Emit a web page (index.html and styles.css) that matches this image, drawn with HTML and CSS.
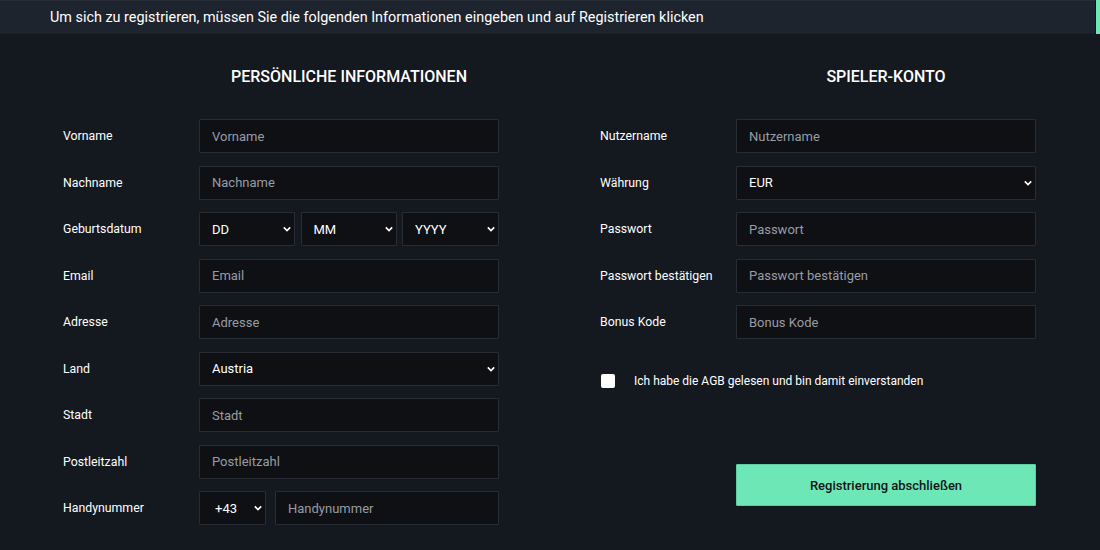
FILE: index.html
```html
<!DOCTYPE html>
<html lang="de">
<head>
<meta charset="utf-8">
<title>Registrierung</title>
<link rel="stylesheet" href="styles.css">
</head>
<body>
<div class="topbar">
  <p class="intro">Um sich zu registrieren, müssen Sie die folgenden Informationen eingeben und auf Registrieren klicken</p>
  <span class="stripe"></span>
</div>
<main class="main">
  <section class="col">
    <h2 class="heading">PERSÖNLICHE INFORMATIONEN</h2>
    <label class="lbl">Vorname</label>
    <input class="field" placeholder="Vorname">
    <label class="lbl">Nachname</label>
    <input class="field" placeholder="Nachname">
    <label class="lbl">Geburtsdatum</label>
    <div class="date">
      <span class="sel"><select class="field"><option>DD</option></select><svg class="chev" viewBox="0 0 10 6"><path d="M1 1l4 4 4-4" fill="none" stroke="#fff" stroke-width="2"/></svg></span>
      <span class="sel"><select class="field"><option>MM</option></select><svg class="chev" viewBox="0 0 10 6"><path d="M1 1l4 4 4-4" fill="none" stroke="#fff" stroke-width="2"/></svg></span>
      <span class="sel"><select class="field"><option>YYYY</option></select><svg class="chev" viewBox="0 0 10 6"><path d="M1 1l4 4 4-4" fill="none" stroke="#fff" stroke-width="2"/></svg></span>
    </div>
    <label class="lbl">Email</label>
    <input class="field" placeholder="Email">
    <label class="lbl">Adresse</label>
    <input class="field" placeholder="Adresse">
    <label class="lbl">Land</label>
    <span class="sel"><select class="field"><option>Austria</option></select><svg class="chev" viewBox="0 0 10 6"><path d="M1 1l4 4 4-4" fill="none" stroke="#fff" stroke-width="2"/></svg></span>
    <label class="lbl">Stadt</label>
    <input class="field" placeholder="Stadt">
    <label class="lbl">Postleitzahl</label>
    <input class="field" placeholder="Postleitzahl">
    <label class="lbl">Handynummer</label>
    <div class="phone">
      <span class="sel"><select class="field code"><option>+43</option></select><svg class="chev" viewBox="0 0 10 6"><path d="M1 1l4 4 4-4" fill="none" stroke="#fff" stroke-width="2"/></svg></span>
      <input class="field" placeholder="Handynummer">
    </div>
  </section>
  <section class="col">
    <h2 class="heading">SPIELER-KONTO</h2>
    <label class="lbl">Nutzername</label>
    <input class="field" placeholder="Nutzername">
    <label class="lbl">Währung</label>
    <span class="sel"><select class="field"><option>EUR</option></select><svg class="chev" viewBox="0 0 10 6"><path d="M1 1l4 4 4-4" fill="none" stroke="#fff" stroke-width="2"/></svg></span>
    <label class="lbl">Passwort</label>
    <input class="field" type="password" placeholder="Passwort">
    <label class="lbl">Passwort bestätigen</label>
    <input class="field" type="password" placeholder="Passwort bestätigen">
    <label class="lbl">Bonus Kode</label>
    <input class="field" placeholder="Bonus Kode">
    <label class="agree"><span class="box"></span><span>Ich habe die AGB gelesen und bin damit einverstanden</span></label>
    <button class="submit">Registrierung abschließen</button>
  </section>
</main>
</body>
</html>
```
FILE: styles.css
```css
* { box-sizing: border-box; }
html, body { margin: 0; padding: 0; }
body {
  width: 1100px;
  height: 550px;
  overflow: hidden;
  background: #14181f;
  color: #fff;
  font-family: Roboto, "Liberation Sans", Arial, sans-serif;
}
.topbar {
  height: 34px;
  background: #1e242d;
  border-top: 1px solid #262d37;
  border-bottom: 1px solid #1a1f27;
  display: flex;
  align-items: center;
  justify-content: space-between;
  padding-left: 50px;
}
.intro {
  margin: 0;
  padding-top: 1px;
  font-size: 14.4px;
  line-height: 20px;
  color: #fff;
}
.stripe {
  align-self: stretch;
  width: 5px;
  margin-top: -1px;
  margin-bottom: -1px;
  background: #6ee7b7;
  border-left: 1px solid #10141a;
}
.main {
  display: flex;
  gap: 101px;
  padding: 33px 0 0 63px;
}
.col {
  display: grid;
  grid-template-columns: 136px 300px;
  row-gap: 12.5px;
  align-items: center;
  align-content: start;
}
.heading {
  grid-column: 2;
  margin: 0 0 19.5px;
  font-size: 16px;
  line-height: 20px;
  font-weight: 500;
  text-align: center;
  white-space: nowrap;
}
.lbl {
  grid-column: 1;
  font-size: 12.3px;
  font-weight: 400;
  color: #fff;
  white-space: nowrap;
}
.field {
  display: block;
  width: 100%;
  height: 34px;
  margin: 0;
  background: #0e1014;
  border: 1px solid #282d35;
  border-radius: 1px;
  color: #fff;
  font-family: inherit;
  font-size: 13px;
  padding: 0 12px;
  outline: none;
}
.field::placeholder { color: #989ca3; }
select.field {
  appearance: none;
  -webkit-appearance: none;
  font-weight: 400;
}
.sel {
  position: relative;
  display: block;
}
.col > .sel { grid-column: 2; }
.chev {
  position: absolute;
  right: 4px;
  top: 14px;
  width: 8px;
  height: 6px;
  pointer-events: none;
}
.date {
  grid-column: 2;
  display: grid;
  grid-template-columns: 96px 96px 97px;
  column-gap: 5.5px;
}
.phone {
  grid-column: 2;
  display: grid;
  grid-template-columns: 67px 1fr;
  column-gap: 9px;
}
.code { padding-left: 15px; }
.col > input.field { grid-column: 2; }
.agree {
  grid-column: 1 / span 2;
  display: flex;
  align-items: center;
  gap: 19px;
  margin-top: 21px;
  padding-left: 1px;
  font-size: 12px;
  font-weight: 400;
  height: 16px;
  white-space: nowrap;
}
.box {
  width: 14px;
  height: 14px;
  background: #fff;
  border-radius: 2px;
  flex: none;
}
.submit {
  grid-column: 2;
  margin-top: 63px;
  height: 42px;
  width: 100%;
  background: #6ee7b7;
  border: 1px solid #5fcfa3;
  border-radius: 1px;
  color: #111418;
  font-family: inherit;
  font-size: 13px;
  font-weight: 500;
  cursor: pointer;
}
```
